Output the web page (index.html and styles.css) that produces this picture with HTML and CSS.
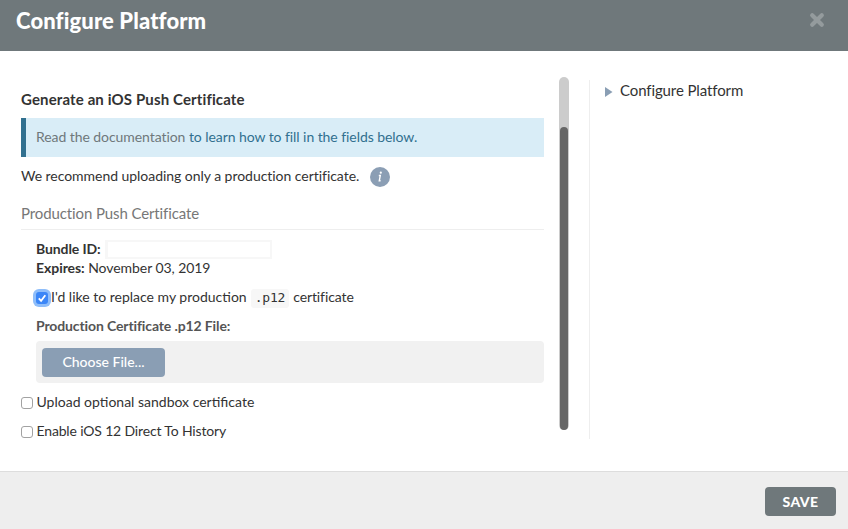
FILE: index.html
```html
<!DOCTYPE html>
<html lang="en">
<head>
<meta charset="utf-8">
<title>Configure Platform</title>
<link rel="stylesheet" href="styles.css">
</head>
<body>
<div class="modal">
  <header class="modal-header">
    <h1><span class="fit-title">Configure Platform</span></h1>
    <svg class="close" viewBox="0 0 16 16"><path d="M3.2 3.2l9.6 9.6M12.8 3.2L3.2 12.8"/></svg>
  </header>
  <div class="modal-body">
    <main class="content">
      <h2><span class="fit-heading">Generate an iOS Push Certificate</span></h2>
      <div class="notice"><span class="fit-notice"><span class="muted">Read the documentation</span> to learn how to fill in the fields below.</span></div>
      <p class="recommend"><span class="fit-recommend">We recommend uploading only a production certificate.</span>
        <svg class="info" viewBox="0 0 20 20"><circle cx="10" cy="10" r="10"/><circle class="mark" cx="10.8" cy="5.7" r="1.1"/><path d="M8.8 8.5h1.5L9.3 13.7h1.3"/></svg>
      </p>
      <h3><span class="fit-section">Production Push Certificate</span></h3>
      <div class="details">
        <p class="bundle"><b class="fit-bundle">Bundle ID:</b><span class="redacted"></span></p>
        <p class="expires"><span class="fit-expires"><b>Expires:</b> November 03, 2019</span></p>
        <div class="replace">
          <span class="box checked"><svg viewBox="0 0 12 12"><path d="M2.8 6.3l2.3 2.6L9.3 3.2"/></svg></span>
          <span class="fit-replace">I'd like to replace my production</span>
          <code>.p12</code>
          <span class="fit-cert">certificate</span>
        </div>
        <p class="file-label"><span class="fit-file">Production Certificate .p12 File:</span></p>
        <div class="file"><span class="choose">Choose File...</span></div>
      </div>
      <div class="option"><span class="box"></span><span class="fit-sandbox">Upload optional sandbox certificate</span></div>
      <div class="option"><span class="box"></span><span class="fit-history">Enable iOS 12 Direct To History</span></div>
    </main>
    <div class="scrollbar"><div class="thumb"></div></div>
    <aside class="steps">
      <svg class="arrow" viewBox="0 0 8 10"><path d="M0 0L7.5 5L0 10Z"/></svg>
      <span class="fit-step">Configure Platform</span>
    </aside>
  </div>
  <footer class="modal-footer"><span class="save">SAVE</span></footer>
</div>
</body>
</html>
```
FILE: styles.css
```css
* { box-sizing: border-box; }
body { margin: 0; font: 14px/20px Lato, "Open Sans", sans-serif; color: #333; background: #fff; }
h1, h2, h3, p { margin: 0; }
.modal { height: 529px; display: flex; flex-direction: column; overflow: hidden; }
.modal-header { height: 51px; padding: 0 23px 0 16px; background: #6f787b; display: flex; justify-content: space-between; }
h1 { font-size: 22px; line-height: 41px; font-weight: 900; color: #fff; white-space: nowrap; }
.close { width: 16px; height: 16px; margin-top: 12px; fill: none; stroke: #949b9d; stroke-width: 4.2; stroke-linecap: round; }
.modal-body { height: 420px; display: flex; }
.content { width: 544px; padding: 39px 0 0 21px; white-space: nowrap; }
h2 { font-size: 15px; line-height: 18px; height: 28px; font-weight: 700; }
.notice { height: 39px; border-left: 5px solid #31708f; background: #d9edf7; color: #31708f; line-height: 37px; padding-left: 10px; }
.muted { color: #6f787b; }
.recommend { height: 40px; display: flex; align-items: center; gap: 11px; }
.info { width: 20px; height: 20px; fill: #8b9eb4; }
.info path { fill: none; stroke: #fff; stroke-width: 1.4; }
.info .mark { fill: #fff; }
h3 { height: 33px; line-height: 33px; font-size: 15px; font-weight: 400; color: #777; border-bottom: 1px solid #eee; }
.details { padding: 10px 0 0 15px; }
.bundle { height: 19px; display: flex; align-items: center; gap: 4px; }
.redacted { width: 167px; height: 19px; border: 2px solid #f7f7f7; border-left-width: 3px; }
.expires { height: 19px; line-height: 17px; }
.replace { height: 40px; display: flex; align-items: center; }
.box { width: 12px; height: 12px; border: 1px solid #a2a2a2; border-radius: 3px; background: #fff; flex: none; }
.checked { border: 0; background: #3b86f7; box-shadow: 0 0 0 3px #8fbefa; display: flex; margin-right: 3px; }
.checked svg { width: 12px; height: 12px; fill: none; stroke: #fff; stroke-width: 1.8; }
code { height: 19px; padding: 0 4px; margin: 0 4px; border-radius: 3px; background: #f7f7f7; font: 13px/18px "DejaVu Sans Mono", monospace; letter-spacing: -0.2px; }
.file-label { height: 23px; line-height: 16px; font-weight: 700; color: #555; }
.file { height: 42px; padding: 7px 6px; background: #f1f1f1; border-radius: 4px; margin-bottom: 5px; }
.choose { display: block; width: 123px; height: 29px; line-height: 28px; text-align: center; color: #fff; background: #8a9eb4; border-radius: 4px; font-weight: 500; }
.option { height: 29px; display: flex; align-items: center; gap: 3.5px; }
.scrollbar { width: 10px; height: 353px; margin: 26px 0 0 15px; padding: 50px 1px 0; background: #ccc; border-radius: 5px; }
.thumb { height: 303px; background: #666; border-radius: 4px; }
.steps { height: 359px; margin: 29px 0 0 20px; padding-left: 15px; border-left: 1px solid #eee; display: flex; align-items: flex-start; gap: 7px; font-size: 15px; line-height: 21px; white-space: nowrap; }
.arrow { width: 8px; height: 10px; margin-top: 7px; fill: #8a9eb4; }
.modal-footer { height: 58px; border-top: 1px solid #ddd; background: #eee; display: flex; justify-content: flex-end; padding: 15px 12px 0 0; }
.save { width: 71px; height: 29px; line-height: 30px; text-align: center; color: #fff; font-weight: 900; letter-spacing: 0.4px; background: #6f787b; border-radius: 4px; }

/* Centred labels sit one pixel above the middle of their row. */
.fit-recommend, .fit-bundle, .fit-replace, .fit-cert, .fit-sandbox, .fit-history { padding-bottom: 2px; }

.fit-title { letter-spacing: 0.12px; }
.fit-heading { letter-spacing: 0.13px; }
.fit-notice { letter-spacing: -0.065px; }
.fit-recommend { letter-spacing: -0.04px; }
.fit-section { letter-spacing: -0.11px; }
.fit-bundle { letter-spacing: -0.1px; }
.fit-expires { letter-spacing: -0.06px; }
.fit-cert { letter-spacing: -0.1px; }
.fit-file { letter-spacing: -0.12px; }
.fit-history { letter-spacing: -0.16px; }
.fit-step { letter-spacing: -0.11px; }
```
